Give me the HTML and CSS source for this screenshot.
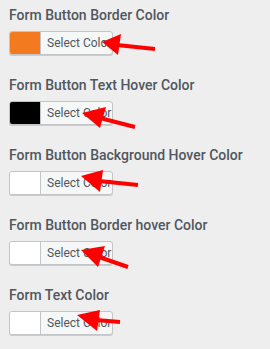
FILE: index.html
```
<!DOCTYPE html>
<html lang="en">
<head>
    <meta charset="UTF-8">
    <meta name="viewport" content="width=device-width, initial-scale=1.0">
    <title>Form Colors</title>
    <link rel="stylesheet" href="styles.css">
</head>
<body>
    <div class="settings">
        <div class="field">
            <div class="field-label">Form Button Border Color</div>
            <button class="color-picker">
                <span class="swatch swatch-orange"></span>
                <span class="picker-text">Select Color</span>
            </button>
        </div>

        <div class="field">
            <div class="field-label">Form Button Text Hover Color</div>
            <button class="color-picker">
                <span class="swatch swatch-black"></span>
                <span class="picker-text">Select Color</span>
            </button>
        </div>

        <div class="field">
            <div class="field-label">Form Button Background Hover Color</div>
            <button class="color-picker">
                <span class="swatch"></span>
                <span class="picker-text">Select Color</span>
            </button>
        </div>

        <div class="field">
            <div class="field-label">Form Button Border hover Color</div>
            <button class="color-picker">
                <span class="swatch"></span>
                <span class="picker-text">Select Color</span>
            </button>
        </div>

        <div class="field">
            <div class="field-label">Form Text Color</div>
            <button class="color-picker">
                <span class="swatch"></span>
                <span class="picker-text">Select Color</span>
            </button>
        </div>
    </div>

    <!-- Red annotation arrows -->
    <svg class="arrows" width="270" height="349" viewBox="0 0 270 349">
        <g fill="#ff0000" stroke="#ff0000" stroke-width="4" stroke-linecap="butt">
            <line x1="117" y1="45" x2="155" y2="49" />
            <polygon stroke="none" points="102,42 121,34 118,55" />

            <line x1="100" y1="118" x2="135" y2="127" />
            <polygon stroke="none" points="82,113 106,107 100,128" />

            <line x1="99" y1="181" x2="138" y2="185" />
            <polygon stroke="none" points="81,176 103,170 100,192" />

            <line x1="99" y1="257" x2="128" y2="267" />
            <polygon stroke="none" points="81,250 105,246 98,267" />

            <line x1="96" y1="320" x2="120" y2="322" />
            <polygon stroke="none" points="77,315 100,310 97,331" />
        </g>
    </svg>
</body>
</html>
```

FILE: styles.css
```
body {
    margin: 0;
    padding: 0;
    background-color: #eeeeee;
    font-family: Roboto, "Liberation Sans", sans-serif;
    position: relative;
    height: 349px;
    overflow: hidden;
}

/* Lista de campos */
.settings {
    padding: 5px 9px;
}

.field {
    margin-bottom: 20px;
}

.field-label {
    font-size: 14px;
    line-height: 20px;
    font-weight: 500;
    color: #50575e;
    margin-bottom: 6px;
}

/* Seletor de cor */
.color-picker {
    display: flex;
    align-items: stretch;
    width: 104px;
    height: 24px;
    padding: 0;
    border: 1px solid #c3c4c7;
    border-radius: 3px;
    background-color: #f6f7f7;
    box-shadow: 0 1px 0 #cccccc;
    overflow: hidden;
    font-family: inherit;
    cursor: pointer;
}

.swatch {
    width: 30px;
    background-color: #ffffff;
    border-right: 1px solid #c3c4c7;
}

.swatch-orange {
    background-color: #f47a20;
}

.swatch-black {
    background-color: #000000;
}

.picker-text {
    display: flex;
    align-items: center;
    padding-left: 6px;
    font-size: 12px;
    color: #50575e;
}

/* Setas */
.arrows {
    position: absolute;
    top: 0;
    left: 0;
    pointer-events: none;
}
```
